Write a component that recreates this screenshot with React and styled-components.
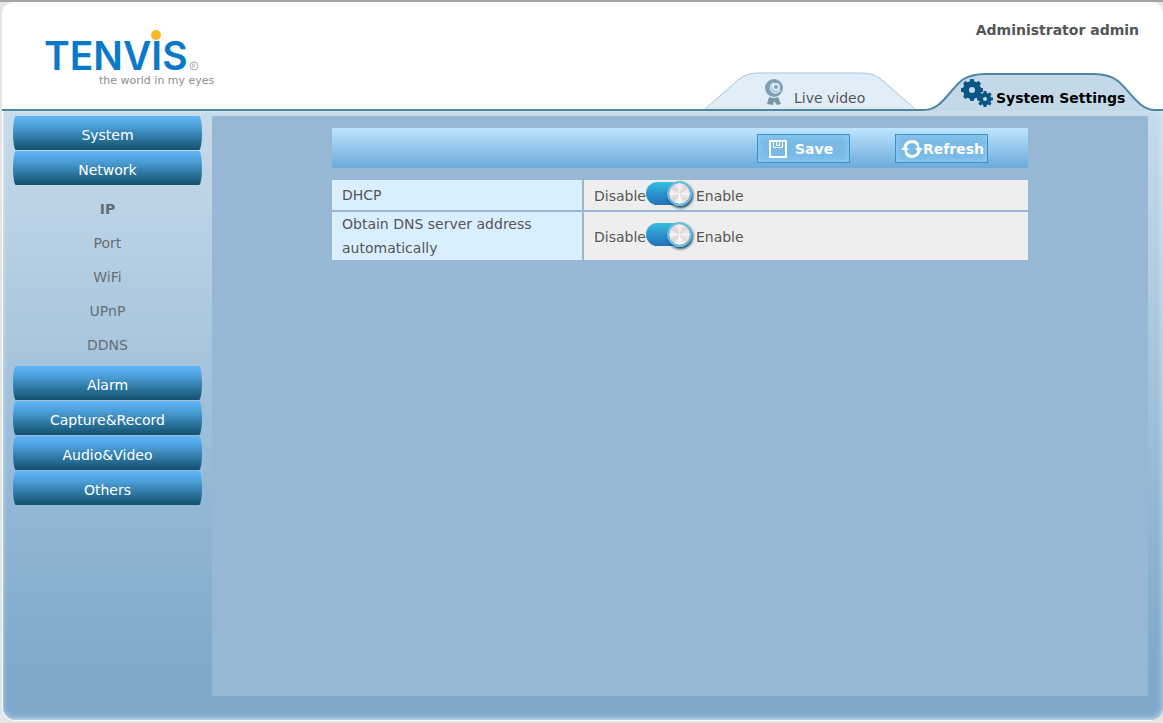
import React, { useState } from 'react'
import styled, { createGlobalStyle, ThemeProvider } from 'styled-components'

const theme = {
  line: '#4d87a3',
  panel: '#96b8d5',
  tab: '#c4d9e8',
  tabIdle: '#e1edf7',
  text: '#555',
  label: '#d9efff',
  value: '#eeeeee',
  icon: '#0b5583'
}

const GlobalStyle = createGlobalStyle`
  *, *::before {
    box-sizing: border-box;
  }
  body {
    margin: 0;
    background: #e4e6e6;
    color: #555;
    font: 14px/24px Verdana, "DejaVu Sans", sans-serif;
  }
  button, input {
    font: inherit;
  }
`

const Page = styled.div`
  display: flex;
  min-height: 100vh;
  padding: 0 0 2px 2px;
  border-top: 2px solid #a4a6a6;
`
const Card = styled.div`
  display: flex;
  flex: 1;
  flex-direction: column;
  overflow: hidden;
  border-radius: 12px;
  background: #fff;
`
const Header = styled.header`
  display: flex;
  justify-content: space-between;
  height: 109px;
  padding: 0 8px 0 40px;
  border-bottom: 2px solid ${p => p.theme.line};
`
const LogoLink = styled.a`
  padding-top: 22px;
  svg {
    display: block;
  }
`
const HeaderSide = styled.div`
  display: flex;
  flex-direction: column;
  justify-content: space-between;
  align-items: flex-end;
`
const User = styled.div`
  padding: 16px 16px 0 0;
  font-weight: bold;
`
const Tabs = styled.nav`
  display: flex;
  align-items: flex-end;
  gap: 8px;
  margin-bottom: -2px;
`
const Tab = styled.a`
  display: grid;
  padding-bottom: ${p => (p.$active ? 0 : 2)}px;
  color: ${p => (p.$active ? '#000' : p.theme.text)};
  font-weight: ${p => (p.$active ? 'bold' : 'normal')};
  text-decoration: none;

  > * {
    grid-area: 1 / 1;
  }
`
const TabLabel = styled.span`
  display: flex;
  align-items: flex-start;
  gap: ${p => (p.$active ? 3 : 10)}px;
  padding: ${p => (p.$active ? '5px 0 0 36px' : '7px 0 0 60px')};
  line-height: 22px;

  span {
    padding-top: ${p => (p.$active ? 10 : 8)}px;
  }
`

const Main = styled.div`
  display: flex;
  flex: 1;
  gap: 10px;
  padding: 5px 15px 25px 11px;
  border-radius: 0 0 12px 12px;
  background: linear-gradient(#c6dbea, #bcd3e6 15%, #8fb5d3 68%, #7ea9cb 92%, #7ea9cb);
  box-shadow: inset 1px -1px 1px #fff, inset 0 -2px 6px rgba(255, 255, 255, 0.6);
`
const Sidebar = styled.nav`
  width: 189px;
`
const MenuButton = styled.button`
  display: block;
  width: 100%;
  height: 34px;
  margin-bottom: 1px;
  padding: 4px 0 0;
  border: 0;
  border-radius: 3px / 17px;
  background: linear-gradient(#62b6f7, #4b9fd8 30%, #2a7199 70%, #12506e);
  color: #fff;
  cursor: pointer;
`
const SubMenu = styled.ul`
  margin: 0;
  padding: 6px 0 4px;
  list-style: none;
`
const SubLink = styled.a`
  display: block;
  color: #666d74;
  font-weight: ${p => (p.$active ? 'bold' : 'normal')};
  line-height: 34px;
  text-align: center;
  text-decoration: none;
`

const Content = styled.main`
  flex: 1;
  padding: 12px 120px;
  background: ${p => p.theme.panel};
`
const Toolbar = styled.div`
  display: flex;
  justify-content: flex-end;
  align-items: center;
  gap: 45px;
  height: 40px;
  margin-bottom: 12px;
  padding-right: 40px;
  background: linear-gradient(#bde4ff, #6caad9);
`
const ToolButton = styled.button`
  display: flex;
  align-items: center;
  gap: ${p => p.$gap}px;
  width: 93px;
  height: 29px;
  padding: 2px 0 0 ${p => p.$inset}px;
  border: 1px solid #3d8fc4;
  background: #78b9e6;
  box-shadow: inset 0 0 8px #95d2f8;
  color: #fff;
  font-weight: bold;
  cursor: pointer;

  svg {
    flex: none;
  }
`

const Settings = styled.table`
  width: 100%;
  border-spacing: 0;

  tr + tr > * {
    border-top: 2px solid ${p => p.theme.panel};
  }
`
const Label = styled.th`
  width: 252px;
  height: 30px;
  padding: 0 10px;
  border-right: 2px solid ${p => p.theme.panel};
  background: ${p => p.theme.label};
  font-weight: normal;
  text-align: left;
`
const Value = styled.td`
  padding: 0 10px;
  background: ${p => p.theme.value};
`
const SwitchLabel = styled.label`
  display: flex;
  align-items: center;
  height: 28px;

  span {
    padding-top: 2px;
  }
`
const SwitchInput = styled.input`
  display: flex;
  justify-content: ${p => (p.checked ? 'flex-end' : 'flex-start')};
  align-items: center;
  appearance: none;
  width: 46px;
  height: 23px;
  margin: 0 4px 3px 0;
  border-radius: 12px;
  background: linear-gradient(#35bfe0, #2a93cd 50%, #2572b8);
  cursor: pointer;

  &::before {
    content: '';
    width: 25px;
    height: 25px;
    border: 2px solid #6cbce0;
    border-radius: 50%;
    background: conic-gradient(#f6f0f0, #ddd4d6, #f8f4f4, #e2d9da, #fff, #d9d0d2, #f8f4f4, #ddd4d6, #f6f0f0) padding-box;
    box-shadow: 1px 2px 3px #0f4560;
  }
`

const Logo = () => (
  <svg width="180" height="66" role="img" aria-label="TENVIS the world in my eyes">
    <text x="2" y="46" fill="#0a7ac8" fontFamily="Inter, sans-serif" fontSize="39" fontWeight="600">TENVIS</text>
    <circle cx="114" cy="11" r="5" fill="#f9b824" />
    <circle cx="152" cy="42" r="4" fill="none" stroke="#aaa" />
    <path d="M150.5 44v-4h2q1.500 1 0 2h-2m1.500 0l1.500 2" fill="none" stroke="#aaa" strokeWidth="0.7" />
    <text x="57" y="60" fill="#8c8c8c" fontFamily="DejaVu Sans, sans-serif" fontSize="11">the world in my eyes</text>
  </svg>
)

const IdleTabShape = () => (
  <svg width="212" height="37" viewBox="0 0 212 37">
    <path
      d="M1 37L34 8Q42 1 54 1H158Q170 1 178 8L211 37"
      fill={theme.tabIdle}
      stroke="#a9c5da"
    />
  </svg>
)

const ActiveTabShape = () => (
  <svg width="231" height="39" viewBox="0 0 231 39">
    <path d="M0 39V38C17 38 24 20 38 8Q47 2 62 2H170Q185 2 194 9C207 20 215 38 231 38V39Z" fill={theme.tab} />
    <path
      d="M0 38C17 38 24 20 38 8Q47 2 62 2H170Q185 2 194 9C207 20 215 38 231 38"
      fill="none"
      stroke={theme.line}
      strokeWidth="2"
    />
  </svg>
)

const WebcamIcon = () => (
  <svg width="20" height="28" viewBox="0 0 20 28">
    <path d="M5 18Q10 20 14 18L17 25L13 26L10 22L9 26L3 25Z" fill="#7897ab" />
    <circle cx="10" cy="9" r="9" fill="#7f9fb5" />
    <path d="M10 4A5 5 0 1 0 16 11" fill="none" stroke="#e1edf7" strokeWidth="1.500" />
    <circle cx="12" cy="8" r="3" fill="none" stroke="#e1edf7" strokeWidth="2" />
  </svg>
)

const Gear = ({ x, y, r, hole, teeth, size }) => (
  <g transform={`translate(${x} ${y})`}>
    <circle r={(r + hole) / 2} fill="none" stroke={theme.icon} strokeWidth={r - hole} />
    {Array.from({ length: teeth }, (_, i) => (
      <path
        key={i}
        d={`M${-size / 2} ${-r + 1}L${-size / 3} ${-r - 2}H${size / 3}L${size / 2} ${-r + 1}Z`}
        fill={theme.icon}
        transform={`rotate(${(i * 360) / teeth})`}
      />
    ))}
  </g>
)

const GearsIcon = () => (
  <svg width="33" height="31" viewBox="0 0 33 31">
    <Gear x={12} y={13} r={9} hole={3} teeth={8} size={5} />
    <Gear x={25} y={22} r={6} hole={2} teeth={8} size={4} />
  </svg>
)

const SaveIcon = () => (
  <svg width="18" height="18" viewBox="0 0 18 18" fill="none" stroke="#fff">
    <path d="M1 1H17V17H1Z" strokeWidth="2" />
    <path d="M4.500 2V7.500H13.500V2M7.500 2V5.500H10.500V2" />
  </svg>
)

const RefreshIcon = () => (
  <svg width="22" height="20" viewBox="0 0 22 20">
    <path d="M4 9A7 7 0 0 1 17 6M18 11A7 7 0 0 1 5 14" fill="none" stroke="#fff" strokeWidth="3" />
    <path d="M0 11L4 6L8 11ZM14 9H22L18 14Z" fill="#fff" />
    <path d="M16 4L18 10M4 10L6 16" stroke="#fff" strokeWidth="2" />
  </svg>
)

const Switch = ({ name, label }) => {
  const [on, setOn] = useState(true)
  return (
    <SwitchLabel>
      <span>Disable</span>
      <SwitchInput
        type="checkbox"
        role="switch"
        name={name}
        aria-label={label}
        checked={on}
        onChange={e => setOn(e.target.checked)}
      />
      <span>Enable</span>
    </SwitchLabel>
  )
}

const menu = [
  { title: 'System' },
  { title: 'Network', items: ['IP', 'Port', 'WiFi', 'UPnP', 'DDNS'] },
  { title: 'Alarm' },
  { title: 'Capture&Record' },
  { title: 'Audio&Video' },
  { title: 'Others' }
]

const settings = [
  { name: 'dhcp', label: 'DHCP' },
  { name: 'dns', label: 'Obtain DNS server address automatically' }
]

const App = () => (
  <ThemeProvider theme={theme}>
    <GlobalStyle />
    <Page>
      <Card>
        <Header>
          <LogoLink href="#home">
            <Logo />
          </LogoLink>
          <HeaderSide>
            <User>Administrator admin</User>
            <Tabs>
              <Tab href="#live">
                <IdleTabShape />
                <TabLabel>
                  <WebcamIcon />
                  <span>Live video</span>
                </TabLabel>
              </Tab>
              <Tab href="#settings" $active>
                <ActiveTabShape />
                <TabLabel $active>
                  <GearsIcon />
                  <span>System Settings</span>
                </TabLabel>
              </Tab>
            </Tabs>
          </HeaderSide>
        </Header>
        <Main>
          <Sidebar>
            {menu.map(({ title, items }) => (
              <React.Fragment key={title}>
                <MenuButton type="button">{title}</MenuButton>
                {items && (
                  <SubMenu>
                    {items.map(item => (
                      <li key={item}>
                        <SubLink href={`#${item}`} $active={item === 'IP'}>{item}</SubLink>
                      </li>
                    ))}
                  </SubMenu>
                )}
              </React.Fragment>
            ))}
          </Sidebar>
          <Content>
            <Toolbar>
              <ToolButton type="button" $inset={11} $gap={8}>
                <SaveIcon />
                Save
              </ToolButton>
              <ToolButton type="button" $inset={5} $gap={0}>
                <RefreshIcon />
                Refresh
              </ToolButton>
            </Toolbar>
            <Settings>
              <tbody>
                {settings.map(({ name, label }) => (
                  <tr key={name}>
                    <Label scope="row">{label}</Label>
                    <Value>
                      <Switch name={name} label={label} />
                    </Value>
                  </tr>
                ))}
              </tbody>
            </Settings>
          </Content>
        </Main>
      </Card>
    </Page>
  </ThemeProvider>
)

export default App
